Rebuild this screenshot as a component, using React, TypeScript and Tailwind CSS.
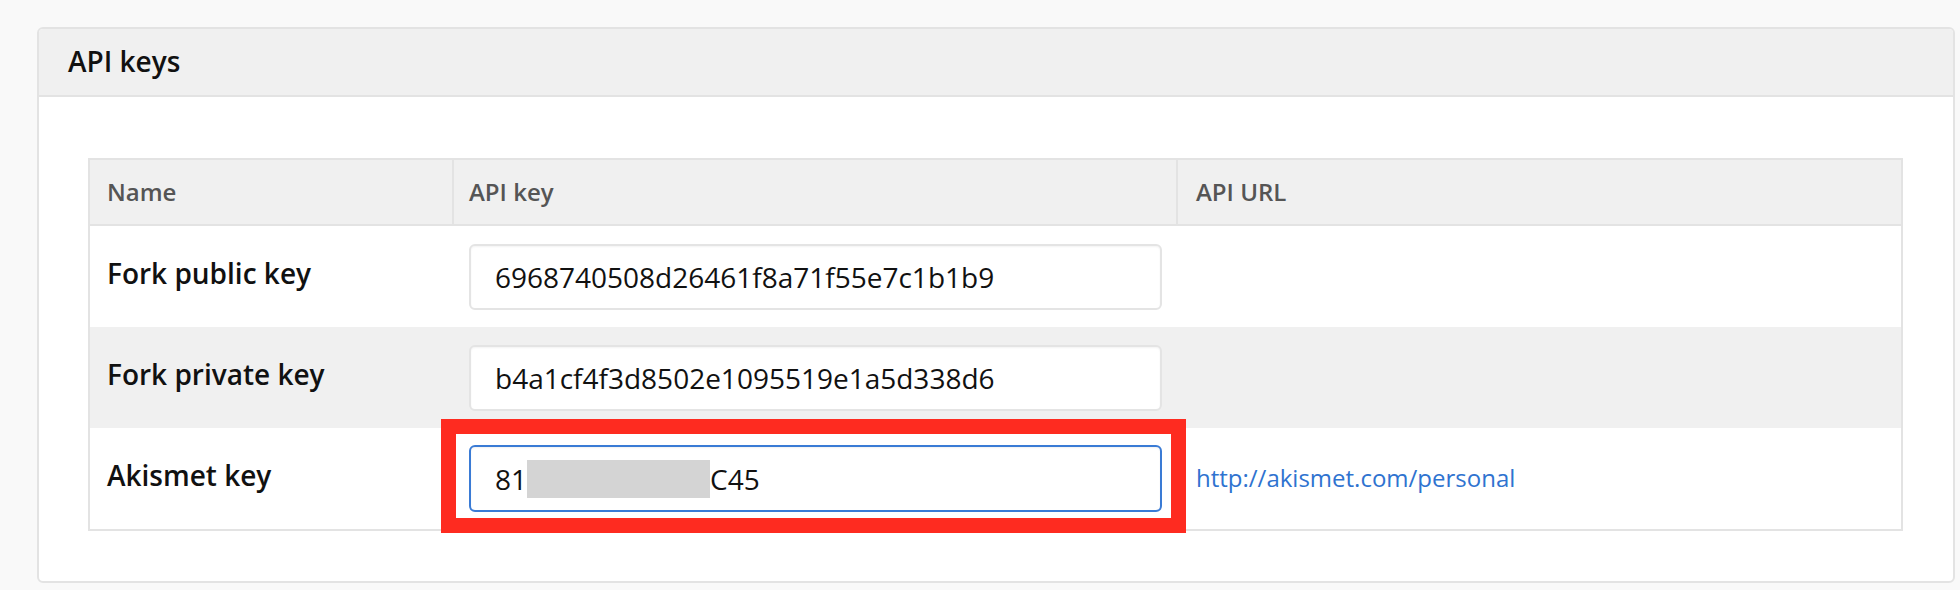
import React from 'react';

type KeyRow = {
  name: string;
  value: string;
  url?: string;
  masked?: boolean;
};

const rows: KeyRow[] = [
  { name: 'Fork public key', value: '6968740508d26461f8a71f55e7c1b1b9' },
  { name: 'Fork private key', value: 'b4a1cf4f3d8502e1095519e1a5d338d6' },
  { name: 'Akismet key', value: '81C45', url: 'http://akismet.com/personal', masked: true },
];

const KeyField: React.FC<{ row: KeyRow }> = ({ row }) => {
  if (row.masked) {
    // akismet key: focused field, middle part blurred out, red callout on top
    return (
      <div className="relative">
        <div className="flex h-[67px] w-[693px] items-center rounded-[6px] border-2 border-[#3a7bd5] bg-white pl-[24px] text-[28px] text-[#111] shadow-[inset_0_1px_2px_rgba(0,0,0,0.06)]">
          <span>81</span>
          <span className="h-[38px] w-[183px] bg-[#d4d4d4]" />
          <span>C45</span>
        </div>
        <div className="pointer-events-none absolute -top-[26px] -right-[24px] -bottom-[21px] -left-[28px] border-[15px] border-[#fe2b20]" />
      </div>
    );
  }
  return (
    <input
      readOnly
      value={row.value}
      className="h-[66px] w-[693px] rounded-[6px] border-2 border-[#e4e4e4] bg-white pl-[24px] text-[28px] text-[#111] shadow-[inset_0_1px_2px_rgba(0,0,0,0.05)] outline-none"
    />
  );
};

const App: React.FC = () => {
  return (
    <div
      className="h-[590px] w-[1960px] overflow-hidden bg-[#f9f9f9] pt-[27px] pr-[5px] pl-[37px]"
      style={{ fontFamily: '"Open Sans", "Noto Sans", sans-serif' }}
    >
      <div className="overflow-hidden rounded-[6px] border-2 border-[#e3e3e3] bg-white">
        <div className="flex h-[68px] items-center border-b-2 border-[#e3e3e3] bg-[#f0f0f0] pb-[2px] pl-[29px]">
          <h2 className="text-[28px] font-semibold text-[#111]">API keys</h2>
        </div>

        <div className="pt-[61px] pr-[50px] pb-[50px] pl-[49px]">
          <div className="border-2 border-[#e3e3e3]">
            <div className="grid h-[66px] grid-cols-[362px_724px_1fr] border-b-2 border-[#e3e3e3] bg-[#f0f0f0] text-[24px] font-semibold text-[#555]">
              <div className="flex items-center pl-[17px]">Name</div>
              <div className="flex items-center border-l-2 border-[#e3e3e3] pl-[15px]">API key</div>
              <div className="flex items-center border-l-2 border-[#e3e3e3] pl-[18px]">API URL</div>
            </div>

            {rows.map((row, i) => (
              <div
                key={row.name}
                className={`grid h-[101px] grid-cols-[362px_724px_1fr] ${i % 2 === 1 ? 'bg-[#f0f0f0]' : 'bg-white'}`}
              >
                <div className="flex items-center pb-[8px] pl-[17px] text-[28px] font-semibold text-[#111]">{row.name}</div>
                <div className="flex items-center pl-[17px]">
                  <KeyField row={row} />
                </div>
                <div className="flex items-center pb-[2px] pl-[20px]">
                  {row.url && (
                    <a href={row.url} className="text-[24px] text-[#2f73d0]">
                      {row.url}
                    </a>
                  )}
                </div>
              </div>
            ))}
          </div>
        </div>
      </div>
    </div>
  );
};

export default App;
